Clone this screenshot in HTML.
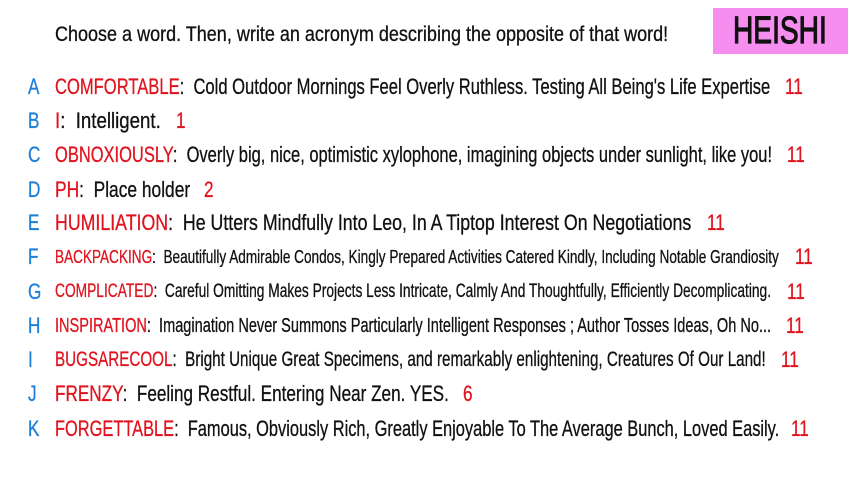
<!DOCTYPE html>
<html><head><meta charset="utf-8"><style>
body{margin:0;width:853px;height:480px;background:#fff;position:relative;overflow:hidden;font-family:"Liberation Sans",sans-serif;}
.r{position:absolute;left:0;height:26px;line-height:26px;white-space:nowrap;}
.l{position:absolute;left:28px;color:#1f7fd8;font-size:22px;-webkit-text-stroke:0.3px #1f7fd8;}
.t{position:absolute;left:55px;display:inline-block;transform-origin:left center;color:#111;font-size:22px;-webkit-text-stroke:0.3px #111;}
.w{color:#e0141e;-webkit-text-stroke:0.3px #e0141e;}
.n{position:absolute;color:#e0141e;font-size:22px;-webkit-text-stroke:0.3px #e0141e;}
#box{position:absolute;left:713px;top:8px;width:135px;height:46px;background:#f68ef0;}
#box span{position:absolute;left:20px;top:3px;font-size:38px;color:#111;display:inline-block;transform-origin:left top;transform:scaleX(0.74);line-height:40px;-webkit-text-stroke:1.2px #111;}
</style></head><body>
<div id="box"><span>HEISHI</span></div>
<div class="r" style="top:22px"><span class="t" data-e="668" style="font-size:21px">Choose a word. Then, write an acronym describing the opposite of that word!</span></div>
<div class="r" style="top:74px"><span class="l">A</span><span class="t" data-e="770"><span class="w">COMFORTABLE</span>:&nbsp; Cold Outdoor Mornings Feel Overly Ruthless. Testing All Being's Life Expertise</span><span class="n" style="left:785px">11</span></div>
<div class="r" style="top:108px"><span class="l">B</span><span class="t" data-e="161"><span class="w">I</span>:&nbsp; Intelligent.</span><span class="n" style="left:176px">1</span></div>
<div class="r" style="top:142px"><span class="l">C</span><span class="t" data-e="772"><span class="w">OBNOXIOUSLY</span>:&nbsp; Overly big, nice, optimistic xylophone, imagining objects under sunlight, like you!</span><span class="n" style="left:787px">11</span></div>
<div class="r" style="top:177px"><span class="l">D</span><span class="t" data-e="190"><span class="w">PH</span>:&nbsp; Place holder</span><span class="n" style="left:204px">2</span></div>
<div class="r" style="top:210px"><span class="l">E</span><span class="t" data-e="691"><span class="w">HUMILIATION</span>:&nbsp; He Utters Mindfully Into Leo, In A Tiptop Interest On Negotiations</span><span class="n" style="left:707px">11</span></div>
<div class="r" style="top:244px"><span class="l">F</span><span class="t" data-e="779" style="font-size:18px"><span class="w">BACKPACKING</span>:&nbsp; Beautifully Admirable Condos, Kingly Prepared Activities Catered Kindly, Including Notable Grandiosity</span><span class="n" style="left:795px">11</span></div>
<div class="r" style="top:279px"><span class="l">G</span><span class="t" data-e="771" style="font-size:19px"><span class="w">COMPLICATED</span>:&nbsp; Careful Omitting Makes Projects Less Intricate, Calmly And Thoughtfully, Efficiently Decomplicating.</span><span class="n" style="left:787px">11</span></div>
<div class="r" style="top:313px"><span class="l">H</span><span class="t" data-e="771" style="font-size:20px"><span class="w">INSPIRATION</span>:&nbsp; Imagination Never Summons Particularly Intelligent Responses ; Author Tosses Ideas, Oh No...</span><span class="n" style="left:786px">11</span></div>
<div class="r" style="top:347px"><span class="l">I</span><span class="t" data-e="766" style="font-size:21px"><span class="w">BUGSARECOOL</span>:&nbsp; Bright Unique Great Specimens, and remarkably enlightening, Creatures Of Our Land!</span><span class="n" style="left:781px">11</span></div>
<div class="r" style="top:381px"><span class="l">J</span><span class="t" data-e="449"><span class="w">FRENZY</span>:&nbsp; Feeling Restful. Entering Near Zen. YES.</span><span class="n" style="left:463px">6</span></div>
<div class="r" style="top:416px"><span class="l">K</span><span class="t" data-e="779"><span class="w">FORGETTABLE</span>:&nbsp; Famous, Obviously Rich, Greatly Enjoyable To The Average Bunch, Loved Easily.</span><span class="n" style="left:791px">11</span></div>
<script>
document.querySelectorAll('.t').forEach(function(e){var tw=e.dataset.e-55;var w=e.offsetWidth;e.style.transform='scaleX('+(tw/w)+')';});
document.querySelectorAll('.n,.l').forEach(function(e){e.style.display='inline-block';e.style.transformOrigin='left center';e.style.transform='scaleX(0.78)';});
</script>
</body></html>
